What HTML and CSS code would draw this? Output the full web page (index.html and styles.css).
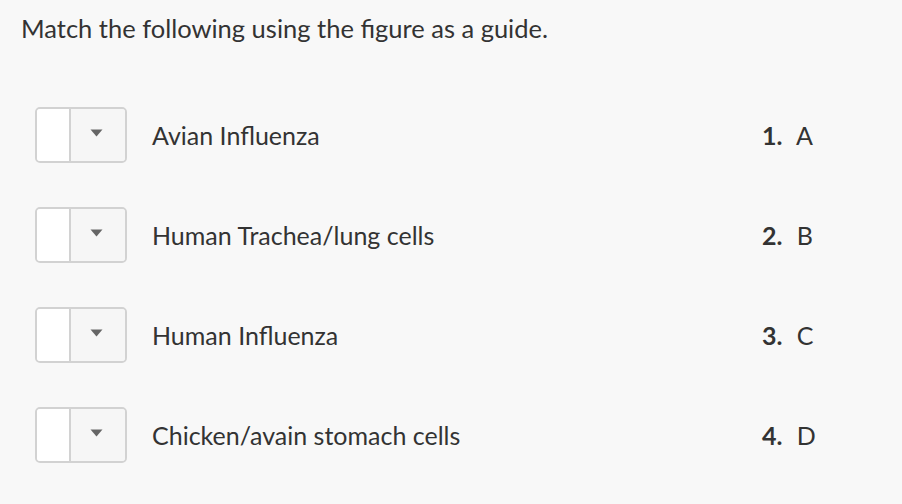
FILE: index.html
```html
<!DOCTYPE html>
<html lang="en">
<head>
  <meta charset="UTF-8">
  <meta name="viewport" content="width=device-width, initial-scale=1.0">
  <title>Matching</title>
  <link rel="stylesheet" href="styles.css">
</head>
<body>
  <div class="question">
    <p class="prompt">Match the following using the figure as a guide.</p>

    <div class="match-list">
      <div class="match-row">
        <div class="select">
          <span class="select-value"></span>
          <span class="select-toggle">
            <svg width="13" height="8" viewBox="0 0 13 8"><path d="M0.5 0.5h12L6.5 7.5z" fill="#666"/></svg>
          </span>
        </div>
        <span class="term">Avian Influenza</span>
        <span class="answer"><b>1.</b> A</span>
      </div>

      <div class="match-row">
        <div class="select">
          <span class="select-value"></span>
          <span class="select-toggle">
            <svg width="13" height="8" viewBox="0 0 13 8"><path d="M0.5 0.5h12L6.5 7.5z" fill="#666"/></svg>
          </span>
        </div>
        <span class="term">Human Trachea/lung cells</span>
        <span class="answer"><b>2.</b> B</span>
      </div>

      <div class="match-row">
        <div class="select">
          <span class="select-value"></span>
          <span class="select-toggle">
            <svg width="13" height="8" viewBox="0 0 13 8"><path d="M0.5 0.5h12L6.5 7.5z" fill="#666"/></svg>
          </span>
        </div>
        <span class="term">Human Influenza</span>
        <span class="answer"><b>3.</b> C</span>
      </div>

      <div class="match-row">
        <div class="select">
          <span class="select-value"></span>
          <span class="select-toggle">
            <svg width="13" height="8" viewBox="0 0 13 8"><path d="M0.5 0.5h12L6.5 7.5z" fill="#666"/></svg>
          </span>
        </div>
        <span class="term">Chicken/avain stomach cells</span>
        <span class="answer"><b>4.</b> D</span>
      </div>
    </div>
  </div>
</body>
</html>
```

FILE: styles.css
```css
* {
  margin: 0;
  padding: 0;
  box-sizing: border-box;
}

body {
  font-family: 'Lato', 'Liberation Sans', sans-serif;
  background-color: #f8f8f8;
  color: #333;
}

.question {
  padding: 13px 0 0 21px;
}

.prompt {
  font-size: 25.5px;
  line-height: 30px;
}

.match-list {
  display: flex;
  flex-direction: column;
  gap: 44px;
  margin-top: 64px;
  padding-left: 14px;
}

.match-row {
  display: grid;
  grid-template-columns: 92px 585px auto;
  column-gap: 25px;
  align-items: center;
  font-size: 25px;
}

.select {
  display: flex;
  height: 56px;
  border: 2px solid #d2d2d2;
  border-radius: 5px;
  overflow: hidden;
}

.select-value {
  width: 34px;
  background-color: #fff;
  border-right: 2px solid #d2d2d2;
}

.select-toggle {
  flex: 1;
  display: flex;
  align-items: center;
  justify-content: center;
  background-color: #f6f6f6;
  padding: 0 4px 5px 0;
}

.answer b {
  margin-right: 8px;
}
```
